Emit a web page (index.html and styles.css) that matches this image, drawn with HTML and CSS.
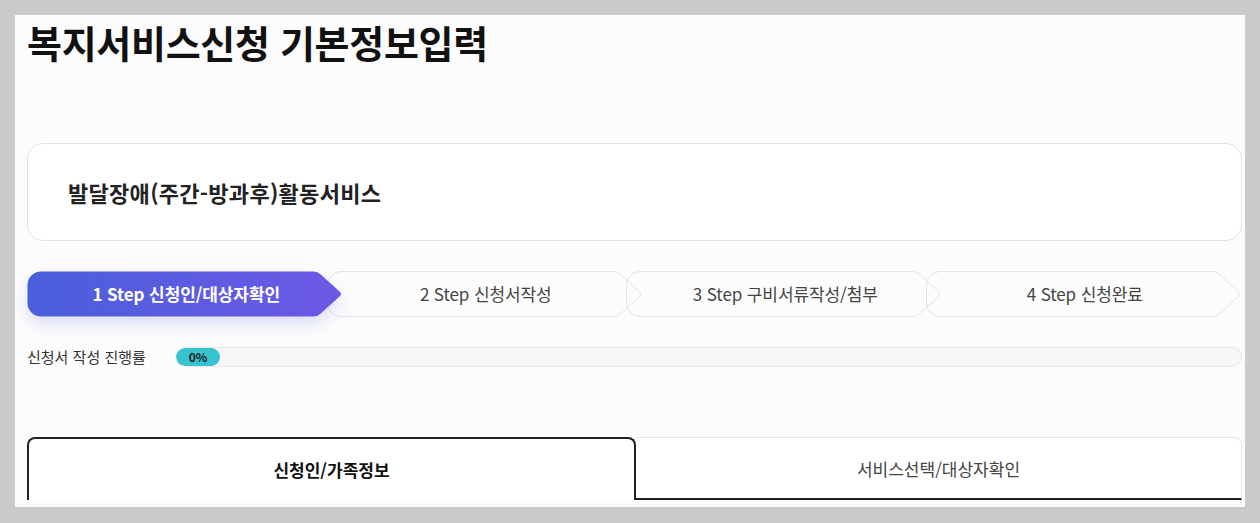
FILE: index.html
```html
<!DOCTYPE html>
<html lang="ko">
<head>
  <meta charset="UTF-8" />
  <meta name="viewport" content="width=device-width, initial-scale=1.0" />
  <title>복지서비스신청 기본정보입력</title>
  <link rel="stylesheet" href="styles.css">
</head>
<body>
  <div class="page">
    <h1 class="title">복지서비스신청 기본정보입력</h1>

    <div class="service-card">
      <p class="service-name">발달장애(주간-방과후)활동서비스</p>
    </div>

    <ol class="steps">
      <li class="step active">
        <svg class="step-shape" viewBox="0 0 320 46" preserveAspectRatio="none">
          <defs>
            <linearGradient id="step-grad" x1="0" y1="0" x2="1" y2="0">
              <stop offset="0" stop-color="#4a5fdb"/>
              <stop offset="1" stop-color="#6d58e5"/>
            </linearGradient>
          </defs>
          <path d="M14 .5H290Q294 .5 297 3.5L316 20.5Q319 23 316 25.5L297 42.5Q294 45.5 290 45.5H14A13.5 13.5 0 0 1 .5 32V14A13.5 13.5 0 0 1 14 .5Z"/>
        </svg>
        <span>1 Step 신청인/대상자확인</span>
      </li>
      <li class="step">
        <svg class="step-shape" viewBox="0 0 320 46" preserveAspectRatio="none"><path d="M14 .5H290Q294 .5 297 3.5L316 20.5Q319 23 316 25.5L297 42.5Q294 45.5 290 45.5H14A13.5 13.5 0 0 1 .5 32V14A13.5 13.5 0 0 1 14 .5Z"/></svg>
        <span>2 Step 신청서작성</span>
      </li>
      <li class="step">
        <svg class="step-shape" viewBox="0 0 320 46" preserveAspectRatio="none"><path d="M14 .5H290Q294 .5 297 3.5L316 20.5Q319 23 316 25.5L297 42.5Q294 45.5 290 45.5H14A13.5 13.5 0 0 1 .5 32V14A13.5 13.5 0 0 1 14 .5Z"/></svg>
        <span>3 Step 구비서류작성/첨부</span>
      </li>
      <li class="step">
        <svg class="step-shape" viewBox="0 0 320 46" preserveAspectRatio="none"><path d="M14 .5H290Q294 .5 297 3.5L316 20.5Q319 23 316 25.5L297 42.5Q294 45.5 290 45.5H14A13.5 13.5 0 0 1 .5 32V14A13.5 13.5 0 0 1 14 .5Z"/></svg>
        <span>4 Step 신청완료</span>
      </li>
    </ol>

    <div class="progress">
      <span class="progress-label">신청서 작성 진행률</span>
      <div class="progress-track">
        <div class="progress-fill">0%</div>
      </div>
    </div>

    <div class="tabs">
      <button class="tab active">신청인/가족정보</button>
      <button class="tab">서비스선택/대상자확인</button>
    </div>
  </div>
</body>
</html>
```

FILE: styles.css
```css
html, body {
  margin: 0;
  height: 100%;
}
body {
  background: #cacaca;
  font-family: 'Noto Sans CJK KR', 'Noto Sans', sans-serif;
  color: #222;
  overflow: hidden;
}
.page {
  margin: 15px 15px 0;
  height: 492px;
  overflow: hidden;
  background: #fcfcfd;
  padding: 0 3px 0 12px;
}
.title {
  margin: 0;
  padding-top: 2px;
  font-size: 38px;
  line-height: 50px;
  font-weight: 700;
  letter-spacing: -0.3px;
  color: #111;
}
.service-card {
  margin-top: 76px;
  height: 96px;
  border: 1px solid #e2e2e5;
  border-radius: 16px;
  background: #fff;
  display: flex;
  align-items: center;
  padding: 0 40px;
}
.service-name {
  margin: 0;
  font-size: 22px;
  font-weight: 700;
  letter-spacing: 0.3px;
  color: #222;
}
.steps {
  list-style: none;
  margin: 30px 0 0;
  padding: 0;
  display: flex;
}
.step {
  position: relative;
  flex: 1;
  height: 46px;
  display: flex;
  align-items: center;
  justify-content: center;
  font-size: 17px;
  color: #444;
  letter-spacing: -0.1px;
}
.step + .step {
  margin-left: -17px;
}
.step span {
  position: relative;
  padding-left: 2px;
  margin-top: -1px;
}
.step-shape {
  position: absolute;
  left: 0;
  top: 0;
  width: 100%;
  height: 100%;
  overflow: visible;
}
.step-shape path {
  fill: none;
  stroke: #e3e3e8;
  stroke-width: 1;
  vector-effect: non-scaling-stroke;
}
.step.active {
  z-index: 1;
  color: #fff;
  font-weight: 700;
}
.step.active .step-shape {
  filter: drop-shadow(0 8px 8px rgba(90, 96, 220, 0.18));
}
.step.active .step-shape path {
  fill: url(#step-grad);
  stroke: none;
}
.progress {
  margin-top: 29px;
  display: flex;
  align-items: center;
}
.progress-label {
  width: 148px;
  font-size: 15px;
  color: #333;
}
.progress-track {
  flex: 1;
  height: 18px;
  border: 1px solid #e8e8ec;
  border-radius: 10px;
  background: #f7f7f9;
  overflow: hidden;
}
.progress-fill {
  width: 44px;
  height: 100%;
  border-radius: 10px;
  background: #36c3cf;
  font-size: 12px;
  font-weight: 700;
  line-height: 18px;
  text-align: center;
  color: #1a1a1a;
}
.tabs {
  margin-top: 70px;
  display: flex;
}
.tab {
  flex: 1;
  height: 63px;
  font-family: inherit;
  font-size: 17px;
  color: #444;
  background: #fff;
  border: 1px solid #e3e3e6;
  border-left: none;
  border-bottom: 2px solid #222;
  border-radius: 0 8px 0 0;
  padding: 0;
}
.tab.active {
  color: #111;
  font-weight: 700;
  border: 2px solid #222;
  border-bottom: none;
  border-radius: 8px 8px 0 0;
}
```
